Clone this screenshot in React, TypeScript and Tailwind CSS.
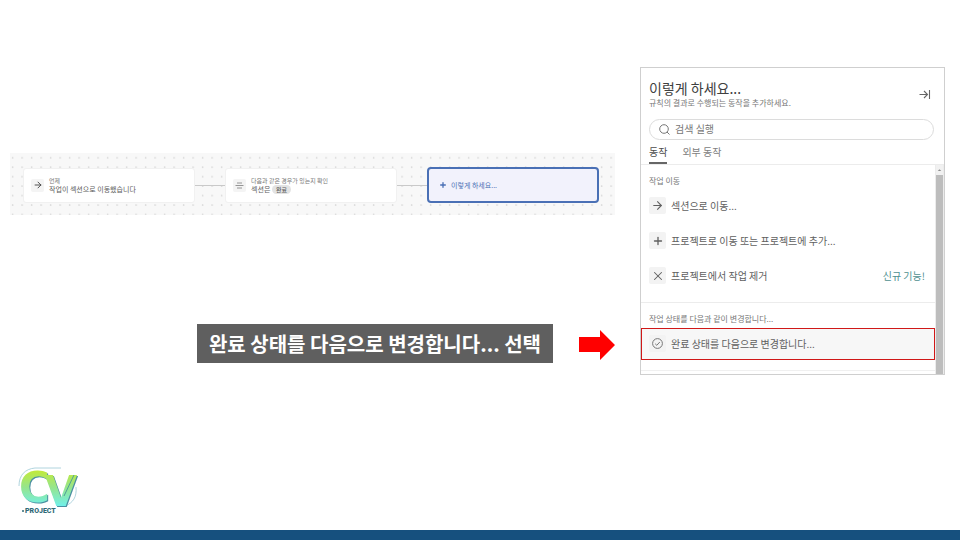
import { ArrowRight, Plus, X } from 'lucide-react'
import type { ReactNode } from 'react'

export default function App() {
  return (
    <div className="flex min-h-screen flex-col bg-white font-['Noto_Sans_CJK_KR',sans-serif] text-[#606060]">
      <main className="flex items-start gap-[25px] pt-[67px] pr-[15px] pl-[10px]">
        <div className="min-w-0 flex-1 pt-[86px]">
          <RuleFlow />
          <div className="mt-[109px] flex items-center justify-end gap-[26px]">
            <p className="bg-[#5f5f5f] px-3 text-[20px] leading-[39px] font-bold whitespace-nowrap text-white">
              완료 상태를 다음으로 변경합니다... 선택
            </p>
            <svg width="36" height="32" viewBox="0 0 36 32" aria-hidden="true" className="mt-[3px]">
              <path d="M0 8H21V1L36 16L21 31V23H0Z" fill="#ff0000" />
            </svg>
          </div>
        </div>
        <ActionPanel />
      </main>
      <footer className="mt-auto">
        <div className="px-[17px] pb-3">
          <Logo />
        </div>
        <div className="h-[10px] bg-[#16507e]" />
      </footer>
    </div>
  )
}

function RuleFlow() {
  return (
    <section aria-label="규칙" className="relative h-[62px] bg-[#f8f8f8]">
      <svg className="absolute inset-0 h-full w-full" aria-hidden="true">
        <defs>
          <pattern id="dots" width="9.5" height="9.45" patternUnits="userSpaceOnUse">
            <circle cx="2.6" cy="4.7" r="0.8" fill="#cfcfcf" />
          </pattern>
        </defs>
        <rect width="100%" height="100%" fill="url(#dots)" />
      </svg>
      <div className="relative grid h-full grid-cols-[1fr_30px_1fr_30px_1fr] items-center pt-[2px] pr-4 pl-[13px]">
        <FlowCard icon={<ArrowRight size={10} strokeWidth={2.2} />} label="언제">
          작업이 섹션으로 이동했습니다
        </FlowCard>
        <Connector />
        <FlowCard
          icon={
            <svg width="9" height="9" viewBox="0 0 9 9" stroke="#8a8a8a" strokeWidth="0.9">
              <path d="M2 2H7M0.5 4.5H8.5M2 7H7" />
            </svg>
          }
          label="다음과 같은 경우가 있는지 확인"
        >
          섹션은{' '}
          <span className="rounded-full bg-[#e3e3e3] px-1 text-[6px] font-medium">완료</span>
        </FlowCard>
        <Connector />
        <button
          type="button"
          className="flex h-9 items-center gap-1 rounded-[4px] border-2 border-[#4a70b5] bg-[#f2f2fc] px-[10px] text-[7px] text-[#4a70b5]"
        >
          <Plus size={8} strokeWidth={4} />
          이렇게 하세요...
        </button>
      </div>
    </section>
  )
}

function FlowCard({ icon, label, children }: { icon: ReactNode; label: string; children: ReactNode }) {
  return (
    <div className="flex h-[35px] items-center gap-[5px] rounded-[3px] border border-[#f1f1f1] bg-white px-[7px]">
      <span className="flex size-[13px] items-center justify-center rounded-[2px] bg-[#f4f4f4] text-[#444]">
        {icon}
      </span>
      <div className="whitespace-nowrap">
        <p className="text-[6px] leading-[9px] text-[#777]">{label}</p>
        <p className="text-[7px] leading-[9px]">{children}</p>
      </div>
    </div>
  )
}

function Connector() {
  return <span className="h-px bg-[#c9c9c9]" />
}

function ActionPanel() {
  return (
    <aside className="w-[305px] border border-[#cfcfcf]">
      <header className="flex items-center justify-between px-2 pt-[12px]">
        <div>
          <h1 className="text-[14px] leading-[17px] text-[#404040]">이렇게 하세요...</h1>
          <p className="text-[8px] leading-[12px] text-[#777]">
            규칙의 결과로 수행되는 동작을 추가하세요.
          </p>
        </div>
        <button type="button" aria-label="닫기" className="mr-[5px] text-[#666]">
          <svg width="12" height="12" viewBox="0 0 12 12" fill="none" stroke="currentColor" strokeWidth="1.1">
            <path d="M0.5 5.5H8.5M5 2L8.5 5.5L5 9M10.5 1V10" />
          </svg>
        </button>
      </header>
      <label className="mt-[10px] mr-[10px] ml-2 flex h-[21px] items-center gap-[5px] rounded-full border border-[#dcdcdc] px-[9px]">
        <svg width="11" height="11" viewBox="0 0 11 11" fill="none" stroke="#777" aria-hidden="true">
          <circle cx="5" cy="5" r="4.3" />
          <path d="M8 8L10.5 10.5" />
        </svg>
        <input
          type="search"
          aria-label="검색 실행"
          placeholder="검색 실행"
          className="min-w-0 flex-1 pb-[2px] text-[10px] outline-none placeholder:text-[#777]"
        />
      </label>
      <nav className="flex gap-[15px] border-b border-[#ececec] px-2 pt-[3px] text-[10px] leading-[18px]">
        <button type="button" className="border-b-2 border-[#666] pb-px text-[#4c4c4c]">
          동작
        </button>
        <button type="button" className="border-b-2 border-transparent pb-px text-[#808080]">
          외부 동작
        </button>
      </nav>
      <div className="flex">
        <div className="min-w-0 flex-1">
          <h2 className="px-2 pt-[10px] text-[8px] leading-[12px] text-[#777]">작업 이동</h2>
          <div className="pt-[1px] pb-[9px]">
            <Action icon={<ArrowRight size={13} />}>섹션으로 이동...</Action>
            <Action icon={<Plus size={12} strokeWidth={2.6} />}>프로젝트로 이동 또는 프로젝트에 추가...</Action>
            <Action icon={<X size={14} strokeWidth={1.8} />} badge="신규 기능!">
              프로젝트에서 작업 제거
            </Action>
          </div>
          <h2 className="border-t border-[#ececec] px-2 pt-[10px] pb-[3px] text-[8px] leading-[12px] text-[#777]">
            작업 상태를 다음과 같이 변경합니다...
          </h2>
          <button
            type="button"
            className="flex h-8 w-full items-center gap-[5px] border border-[#d01818] bg-[#f7f7f7] px-[7px] pb-px text-[10px]"
          >
            <IconBox>
              <svg width="11" height="11" viewBox="0 0 11 11" fill="none" stroke="#777">
                <circle cx="5.5" cy="5.5" r="4.9" />
                <path d="M3.2 5.8L4.8 7.3L7.8 4" />
              </svg>
            </IconBox>
            완료 상태를 다음으로 변경합니다...
          </button>
          <div className="mt-[10px] h-1 border-t border-[#f0f0f0]" />
        </div>
        <div className="flex w-[9px] flex-col border-x border-[#ececec] bg-[#f1f1f1]">
          <svg className="h-[10px] w-full" viewBox="0 0 8 10" aria-hidden="true">
            <path d="M2 6L4 4L6 6Z" fill="#8f8f8f" />
          </svg>
          <div className="flex-1 bg-[#bdbdbd]" />
        </div>
      </div>
    </aside>
  )
}

function Action({ icon, badge, children }: { icon: ReactNode; badge?: string; children: ReactNode }) {
  return (
    <button type="button" className="flex h-[35px] w-full items-center gap-[5px] px-2 text-[10px]">
      <IconBox>{icon}</IconBox>
      {children}
      {badge && <span className="mr-[2px] ml-auto text-[#4f9090]">{badge}</span>}
    </button>
  )
}

function IconBox({ children }: { children: ReactNode }) {
  return (
    <span className="flex size-[17px] items-center justify-center rounded-[2px] bg-[#f3f3f3]">
      {children}
    </span>
  )
}

function Logo() {
  return (
    <svg width="68" height="56" viewBox="0 0 68 56" role="img" aria-label="CV Project">
      <defs>
        <linearGradient id="brand" x1="0" y1="9" x2="0" y2="45" gradientUnits="userSpaceOnUse">
          <stop offset="0" stopColor="#c0ea3c" />
          <stop offset="0.45" stopColor="#96e58c" />
          <stop offset="1" stopColor="#6ff0ee" />
        </linearGradient>
      </defs>
      <path
        d="M2 24C2 13 8 7 18 6H44M59 25C60 35 56 41 48 44"
        fill="none"
        stroke="#9cc9d6"
        strokeWidth="0.8"
      />
      <text
        x="2"
        y="40"
        fontFamily="DejaVu Sans, sans-serif"
        fontSize="42"
        fontWeight="700"
        fill="url(#brand)"
        className="drop-shadow-[1px_1px_0_#4b8fa0]"
      >
        C<tspan dy="4" dx="-5">V</tspan>
      </text>
      <path d="M47 34L57 13" stroke="#4f9f98" strokeWidth="1" />
      <text x="8" y="51" fontFamily="Roboto, sans-serif" fontSize="7" fontWeight="900" fill="#2f6a78">
        PROJECT
      </text>
      <circle cx="6" cy="49" r="1" fill="#2f6a78" />
    </svg>
  )
}
